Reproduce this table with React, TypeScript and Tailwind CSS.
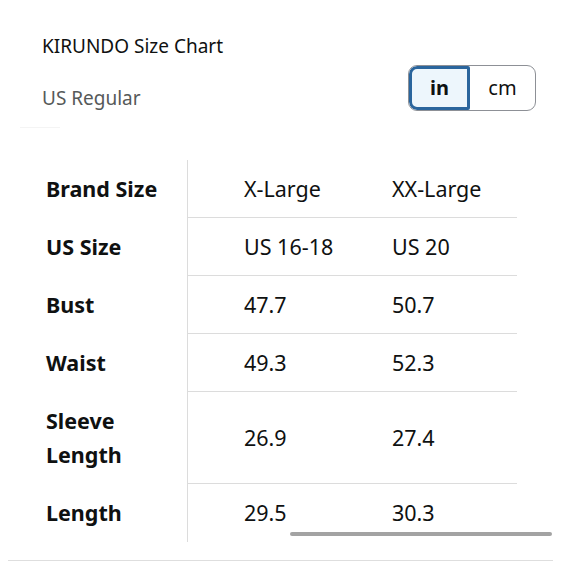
import React, { useState } from 'react';

interface SizeRow {
  label: string[];
  values: string[];
}

const rows: SizeRow[] = [
  { label: ['Brand Size'], values: ['X-Large', 'XX-Large'] },
  { label: ['US Size'], values: ['US 16-18', 'US 20'] },
  { label: ['Bust'], values: ['47.7', '50.7'] },
  { label: ['Waist'], values: ['49.3', '52.3'] },
  { label: ['Sleeve', 'Length'], values: ['26.9', '27.4'] },
  { label: ['Length'], values: ['29.5', '30.3'] },
];

const App: React.FC = () => {
  const [unit, setUnit] = useState<'in' | 'cm'>('in');

  return (
    <div className="w-[580px] h-[580px] bg-white text-[#0f1111] font-['Noto_Sans',sans-serif] overflow-hidden">
      {/* Header */}
      <div className="flex items-start justify-between pt-[34px] pl-[42px] pr-[44px]">
        <div className="flex flex-col">
          <div className="text-[19px] leading-[24px]">KIRUNDO Size Chart</div>
          <div className="mt-[28px] text-[19px] leading-[24px] text-[#565959]">US Regular</div>
        </div>

        {/* Unit toggle */}
        <div className="mt-[31px] flex h-[46px] w-[128px] rounded-[9px] border border-[#8d9096] overflow-hidden">
          <button
            className={`w-[61px] flex items-center justify-center text-[20px] font-bold rounded-l-[8px] rounded-r-[2px] ${
              unit === 'in' ? 'border-[3px] border-[#2a659d] bg-[#edf6fc]' : 'border-r border-[#8d9096]'
            }`}
            onClick={() => setUnit('in')}
          >
            in
          </button>
          <button className="flex-1 flex items-center justify-center text-[20px]" onClick={() => setUnit('cm')}>
            cm
          </button>
        </div>
      </div>

      <div className="ml-[20px] mt-[16px] h-px w-[40px] bg-[#f4f4f4]" />

      {/* Table */}
      <div className="relative mt-[32px] flex">
        {/* Fixed label column */}
        <div className="w-[188px] border-r border-[#dcdcdc] text-[21.5px] font-bold">
          {rows.map((row, i) => (
            <div key={i} className="flex flex-col justify-center pl-[46px] py-[12px] leading-[34px]">
              {row.label.map((l) => (
                <span key={l}>{l}</span>
              ))}
            </div>
          ))}
        </div>

        {/* Scrollable values */}
        <div className="w-[329px] text-[21.5px]">
          {rows.map((row, i) => (
            <div
              key={i}
              className={`flex items-center leading-[34px] ${i < rows.length - 1 ? 'border-b border-[#dcdcdc]' : ''}`}
              style={{ height: row.label.length > 1 ? 92 : 58 }}
            >
              <div className="w-[148px] pl-[56px]">{row.values[0]}</div>
              <div className="flex-1 pl-[56px]">{row.values[1]}</div>
            </div>
          ))}
        </div>

        {/* Scrollbar */}
        <div className="absolute left-[290px] top-[372px] h-[4px] w-[262px] rounded-full bg-[#a3a3a3]" />
      </div>

      <div className="ml-[8px] mt-[18px] h-px w-[545px] bg-[#dedede]" />
    </div>
  );
};

export default App;
